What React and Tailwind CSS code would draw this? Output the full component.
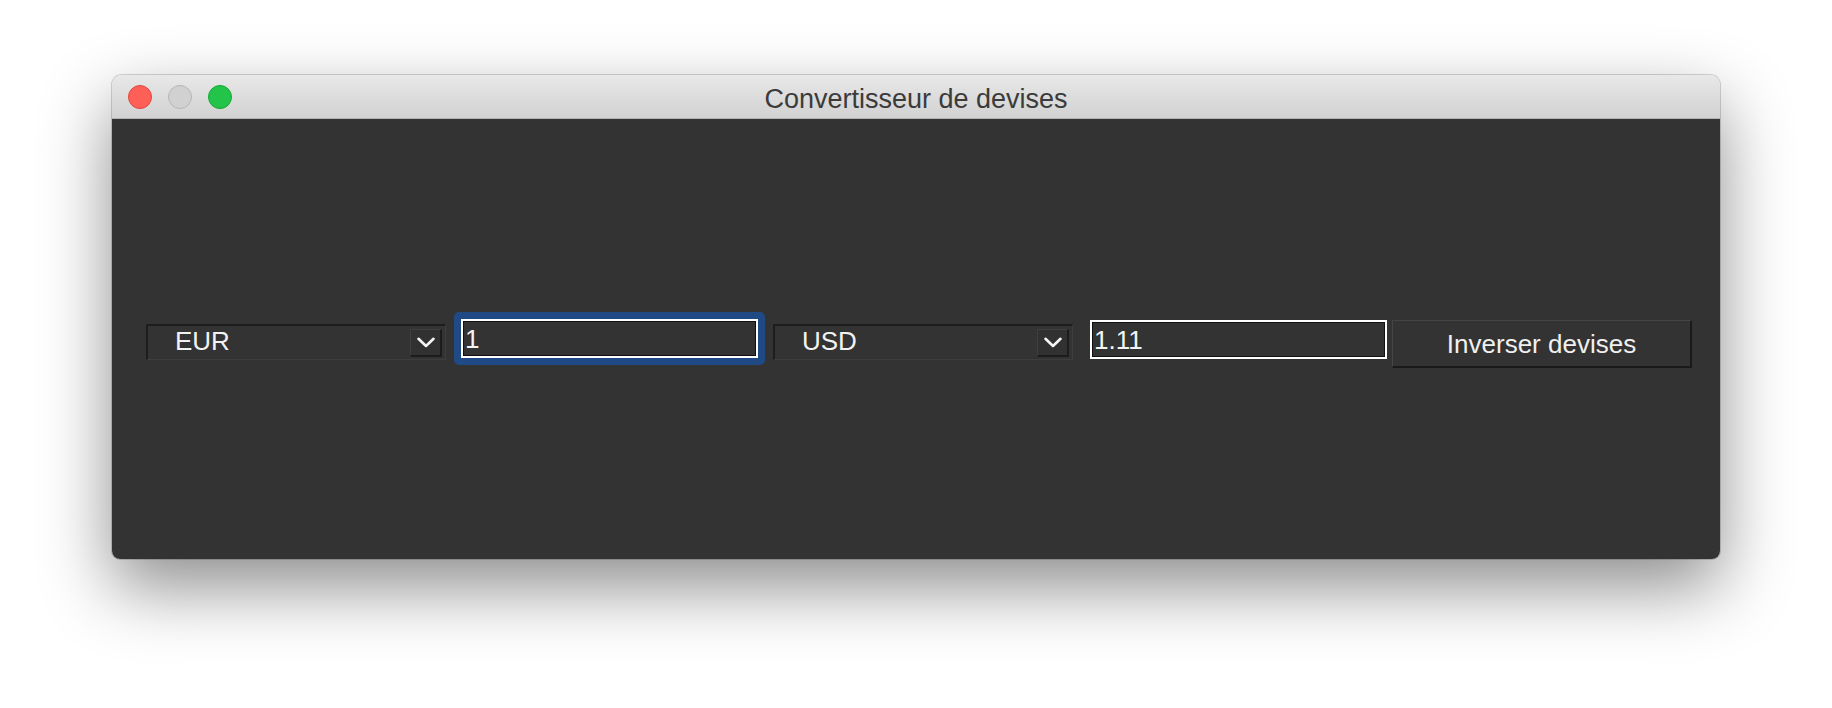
import React from 'react';

const font = { fontFamily: '"Liberation Sans", Arial, sans-serif' };

// Tk-style combobox (dark theme)
const Combo = ({ value }) => (
  <div className="mt-[12px] w-[300px] h-[36px] flex items-center justify-between bg-[#333333] border-t-2 border-l-2 border-[#1d1d1d] border-b border-r border-b-[#3e3e3e] border-r-[#3e3e3e]">
    <span className="pl-[27px] pb-[3px] text-[26px] leading-none text-[#f2f2f2]">{value}</span>
    <div className="mr-[3px] w-[32px] h-[28px] flex items-center justify-center bg-[#313131] border-t border-l border-[#3f3f3f] border-b-2 border-r-2 border-b-[#1c1c1c] border-r-[#1c1c1c]">
      <svg width="18" height="11" viewBox="0 0 18 11" fill="none">
        <path d="M1.5 1.8 L9 9 L16.5 1.8" stroke="#f4f4f4" strokeWidth="2.6" strokeLinecap="round" strokeLinejoin="round" />
      </svg>
    </div>
  </div>
);

const Entry = ({ value }) => (
  <div className="w-[297px] h-[39px] flex items-center border-2 border-white bg-[#333333] shadow-[inset_0_0_0_1px_#111]">
    <span className="pl-[2px] text-[26px] leading-none text-[#f4f4f4]">{value}</span>
  </div>
);

export default function App() {
  return (
    <div className="min-h-[708px] w-full bg-white flex justify-center pt-[75px]" style={font}>
      <div className="w-[1608px] h-[484px] flex flex-col rounded-t-[10px] rounded-b-[8px] overflow-hidden shadow-[0_28px_70px_rgba(0,0,0,0.45),0_0_0_1px_rgba(0,0,0,0.16)]">
        {/* Title bar */}
        <div className="h-[44px] grid grid-cols-[1fr_auto_1fr] items-center bg-gradient-to-b from-[#e8e8e8] to-[#d2d2d2] border-b border-[#b3b3b3]">
          <div className="flex items-center gap-[16px] pl-[16px]">
            <span className="w-[24px] h-[24px] rounded-full bg-[#fe5f57] border border-[#e1463f]" />
            <span className="w-[24px] h-[24px] rounded-full bg-[#d1d1d1] border border-[#b6b6b6]" />
            <span className="w-[24px] h-[24px] rounded-full bg-[#22c449] border border-[#17a834]" />
          </div>
          <span className="pt-[6px] text-[27px] leading-none text-[#3b3b3b]">Convertisseur de devises</span>
          <div />
        </div>

        {/* Content */}
        <div className="flex-1 bg-[#333333] pt-[193px] pl-[34px]">
          <div className="flex items-start">
            <Combo value="EUR" />
            <div className="ml-[8px] p-[7px] rounded-[5px] bg-[#1f4a85]">
              <Entry value="1" />
            </div>
            <div className="ml-[8px]">
              <Combo value="USD" />
            </div>
            <div className="ml-[17px] mt-[8px]">
              <Entry value="1.11" />
            </div>
            <button className="ml-[5px] mt-[8px] w-[300px] h-[48px] flex items-center justify-center bg-[#333333] border-t border-l border-[#454545] border-b-2 border-r-2 border-b-[#1a1a1a] border-r-[#1a1a1a] text-[26px] leading-none text-[#f0f0f0]">
              Inverser devises
            </button>
          </div>
        </div>
      </div>
    </div>
  );
}
